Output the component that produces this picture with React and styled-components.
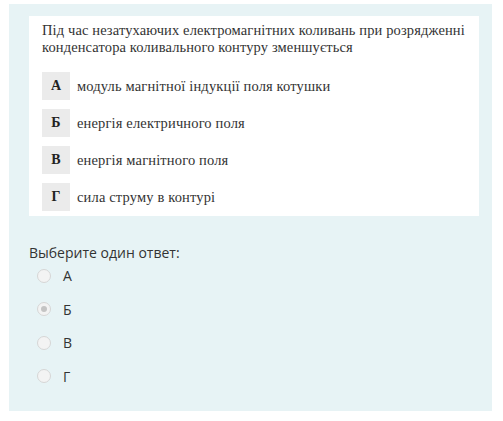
import styled, { createGlobalStyle } from "styled-components";

const Global = createGlobalStyle`
  body {
    margin: 0;
    background: #ffffff;
  }
`;

const Page = styled.div`
  padding: 4px 11px 10px 9px;
`;

const Panel = styled.div`
  background: #e7f3f5;
  padding: 12px 13px 24px 20px;
`;

const Card = styled.div`
  background: #ffffff;
  padding: 6px 8px 5px 13px;
  font-family: "Liberation Serif", "DejaVu Serif", serif;
  color: #333333;
`;

const Question = styled.p`
  margin: 0 0 16px;
  font-size: 14.5px;
  line-height: 17px;
  letter-spacing: 0.12px;
  white-space: nowrap;
`;

const Variants = styled.div`
  display: flex;
  flex-direction: column;
  gap: 9px;
`;

const Variant = styled.div`
  display: flex;
  align-items: center;
  gap: 7px;
`;

const Letter = styled.span`
  width: 28px;
  height: 28px;
  display: flex;
  align-items: center;
  justify-content: center;
  background: #ebebeb;
  font-weight: bold;
  font-size: 14px;
  color: #222222;
`;

const VariantText = styled.span`
  font-size: 14.5px;
  letter-spacing: 0.15px;
`;

const Prompt = styled.div`
  margin-top: 27px;
  font-family: "Open Sans", "Noto Sans", sans-serif;
  font-size: 14px;
  color: #333333;
`;

const Options = styled.div`
  display: flex;
  flex-direction: column;
  gap: 12.6px;
  margin-top: 3px;
  padding-left: 8px;
`;

const Option = styled.label`
  display: flex;
  align-items: center;
  gap: 12px;
  height: 21px;
  font-family: "Open Sans", "Noto Sans", sans-serif;
  font-size: 14px;
  color: #333333;
`;

const Radio = styled.span`
  width: 12px;
  height: 12px;
  border-radius: 50%;
  border: 1px solid #d6d6d6;
  background: #f3f3f3;
  display: flex;
  align-items: center;
  justify-content: center;
  &::after {
    content: "";
    width: 6px;
    height: 6px;
    border-radius: 50%;
    background: ${(p) => (p.checked ? "#c4c4c4" : "transparent")};
  }
`;

const variants = [
  ["А", "модуль магнітної індукції поля котушки"],
  ["Б", "енергія електричного поля"],
  ["В", "енергія магнітного поля"],
  ["Г", "сила струму в контурі"],
];

const App = () => {
  return (
    <Page>
      <Global />
      <Panel>
        <Card>
          <Question>
            Під час незатухаючих електромагнітних коливань при розрядженні
            <br />
            конденсатора коливального контуру зменшується
          </Question>
          <Variants>
            {variants.map(([l, t]) => (
              <Variant key={l}>
                <Letter>{l}</Letter>
                <VariantText>{t}</VariantText>
              </Variant>
            ))}
          </Variants>
        </Card>
        <Prompt>Выберите один ответ:</Prompt>
        <Options>
          {variants.map(([l]) => (
            <Option key={l}>
              <Radio checked={l === "Б"} />
              {l}
            </Option>
          ))}
        </Options>
      </Panel>
    </Page>
  );
};

export default App;
